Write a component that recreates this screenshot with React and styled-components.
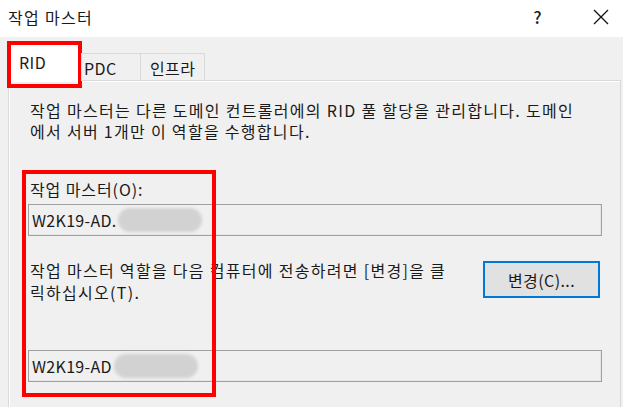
import React from "react";
import styled, { createGlobalStyle } from "styled-components";

const GlobalStyle = createGlobalStyle`
  html, body { margin: 0; padding: 0; background: #f0f0f0; }
  body {
    font-family: "Noto Sans CJK KR", "Noto Sans", sans-serif;
    color: #1a1a1a;
  }
`;

const Window = styled.div`
  width: 623px;
  height: 407px;
  overflow: hidden;
  background: #f0f0f0;
`;

const TitleBar = styled.div`
  height: 37px;
  background: #ffffff;
  display: flex;
  align-items: center;
  padding-left: 8px;
  font-size: 16px;
  letter-spacing: 1.3px;
`;

const Title = styled.div`
  flex: 1;
  margin-top: -4px;
`;

const Help = styled.div`
  font-size: 17px;
  font-weight: 500;
  margin-right: 50px;
  margin-top: -4px;
`;

const Close = styled.div`
  width: 16px;
  height: 16px;
  margin-right: 14px;
  margin-top: -4px;
  display: flex;
`;

const Body = styled.div`
  padding: 8px 2px 0 8px;
`;

const TabRow = styled.div`
  display: flex;
  align-items: flex-end;
  height: 36px;
  margin-bottom: -1px;
  position: relative;
  z-index: 1;
`;

const Tab = styled.div`
  position: relative;
  box-sizing: border-box;
  height: ${(p) => (p.$active ? "37px" : "28px")};
  padding: ${(p) => (p.$active ? "5px 0 0 10px" : "2px 0 0 2px")};
  width: ${(p) => p.$w}px;
  background: ${(p) => (p.$active ? "#ffffff" : "#f0f0f0")};
  border: 1px solid #d9d9d9;
  border-bottom: ${(p) => (p.$active ? "none" : "1px solid #d9d9d9")};
  margin-left: ${(p) => (p.$active ? "0" : "-1px")};
  font-size: 16px;
  letter-spacing: 0.4px;
`;

const Mark = styled.div`
  position: absolute;
  left: ${(p) => p.$l}px;
  top: ${(p) => p.$t}px;
  width: ${(p) => p.$w}px;
  height: ${(p) => p.$h}px;
  border: 4px solid #ff0000;
  box-sizing: border-box;
  pointer-events: none;
`;

const Panel = styled.div`
  position: relative;
  height: 340px;
  border: 1px solid #d9d9d9;
  box-shadow: inset 1px 1px 0 #ffffff;
  background: #f0f0f0;
  padding: 19px 0 0 19px;
  box-sizing: border-box;
`;

const Text = styled.div`
  font-size: 16px;
  line-height: ${(p) => p.$lh || 21}px;
  letter-spacing: ${(p) => p.$ls || 1.3}px;
  margin-left: 2px;
  white-space: nowrap;
`;

const Label = styled(Text)`
  margin-top: 37px;
  margin-bottom: 4px;
`;

const Field = styled.div`
  box-sizing: border-box;
  width: 574px;
  height: 32px;
  border: 1px solid #a0a0a0;
  box-shadow: inset -1px -1px 0 #e6e6e6;
  background: #f0f0f0;
  display: flex;
  align-items: center;
  padding-left: 3px;
  font-size: 16px;
  letter-spacing: 0.3px;
  margin-top: ${(p) => p.$mt || 0}px;
`;

const Smudge = styled.span`
  display: inline-block;
  width: 84px;
  height: 24px;
  border-radius: 12px;
  background: #d2d2d2;
  filter: blur(1.5px);
  margin-left: ${(p) => p.$ml || 0}px;
`;

const TransferRow = styled.div`
  display: flex;
  align-items: flex-start;
  width: 574px;
  margin-top: 23px;
`;

const TransferText = styled(Text)`
  flex: 1;
`;

const Button = styled.button`
  box-sizing: border-box;
  width: 117px;
  height: 37px;
  margin-top: 2px;
  border: 2px solid #0078d7;
  background: #e1e1e1;
  font-family: inherit;
  font-size: 16px;
  letter-spacing: 0.4px;
  color: #1a1a1a;
  padding: 0;
  margin-right: 2px;
`;

export default function App() {
  return (
    <Window>
      <GlobalStyle />
      <TitleBar>
        <Title>작업 마스터</Title>
        <Help>?</Help>
        <Close>
          <svg width="16" height="16" viewBox="0 0 16 16">
            <path d="M1 1 L15 15 M15 1 L1 15" stroke="#111" strokeWidth="1.3" />
          </svg>
        </Close>
      </TitleBar>
      <Body>
        <TabRow>
          <Tab $active $w={74}>
            RID
            <Mark $l={-2} $t={-4} $w={75} $h={47} />
          </Tab>
          <Tab $w={60}>PDC</Tab>
          <Tab $w={65} style={{ paddingLeft: 9 }}>인프라</Tab>
        </TabRow>
        <Panel>
          <Text>
            작업 마스터는 다른 도메인 컨트롤러에의 RID 풀 할당을 관리합니다. 도메인
            <br />
            에서 서버 1개만 이 역할을 수행합니다.
          </Text>
          <Label $ls={0.9}>작업 마스터(O):</Label>
          <Field>
            W2K19-AD.
            <Smudge $ml={2} />
          </Field>
          <TransferRow>
            <TransferText $lh={22}>
              작업 마스터 역할을 다음 컴퓨터에 전송하려면 [변경]을 클
              <br />
              릭하십시오(T).
            </TransferText>
            <Button>변경(C)...</Button>
          </TransferRow>
          <Field $mt={47}>
            W2K19-AD
            <Smudge $ml={2} />
          </Field>
          <Mark $l={13} $t={89} $w={194} $h={227} />
        </Panel>
      </Body>
    </Window>
  );
}
